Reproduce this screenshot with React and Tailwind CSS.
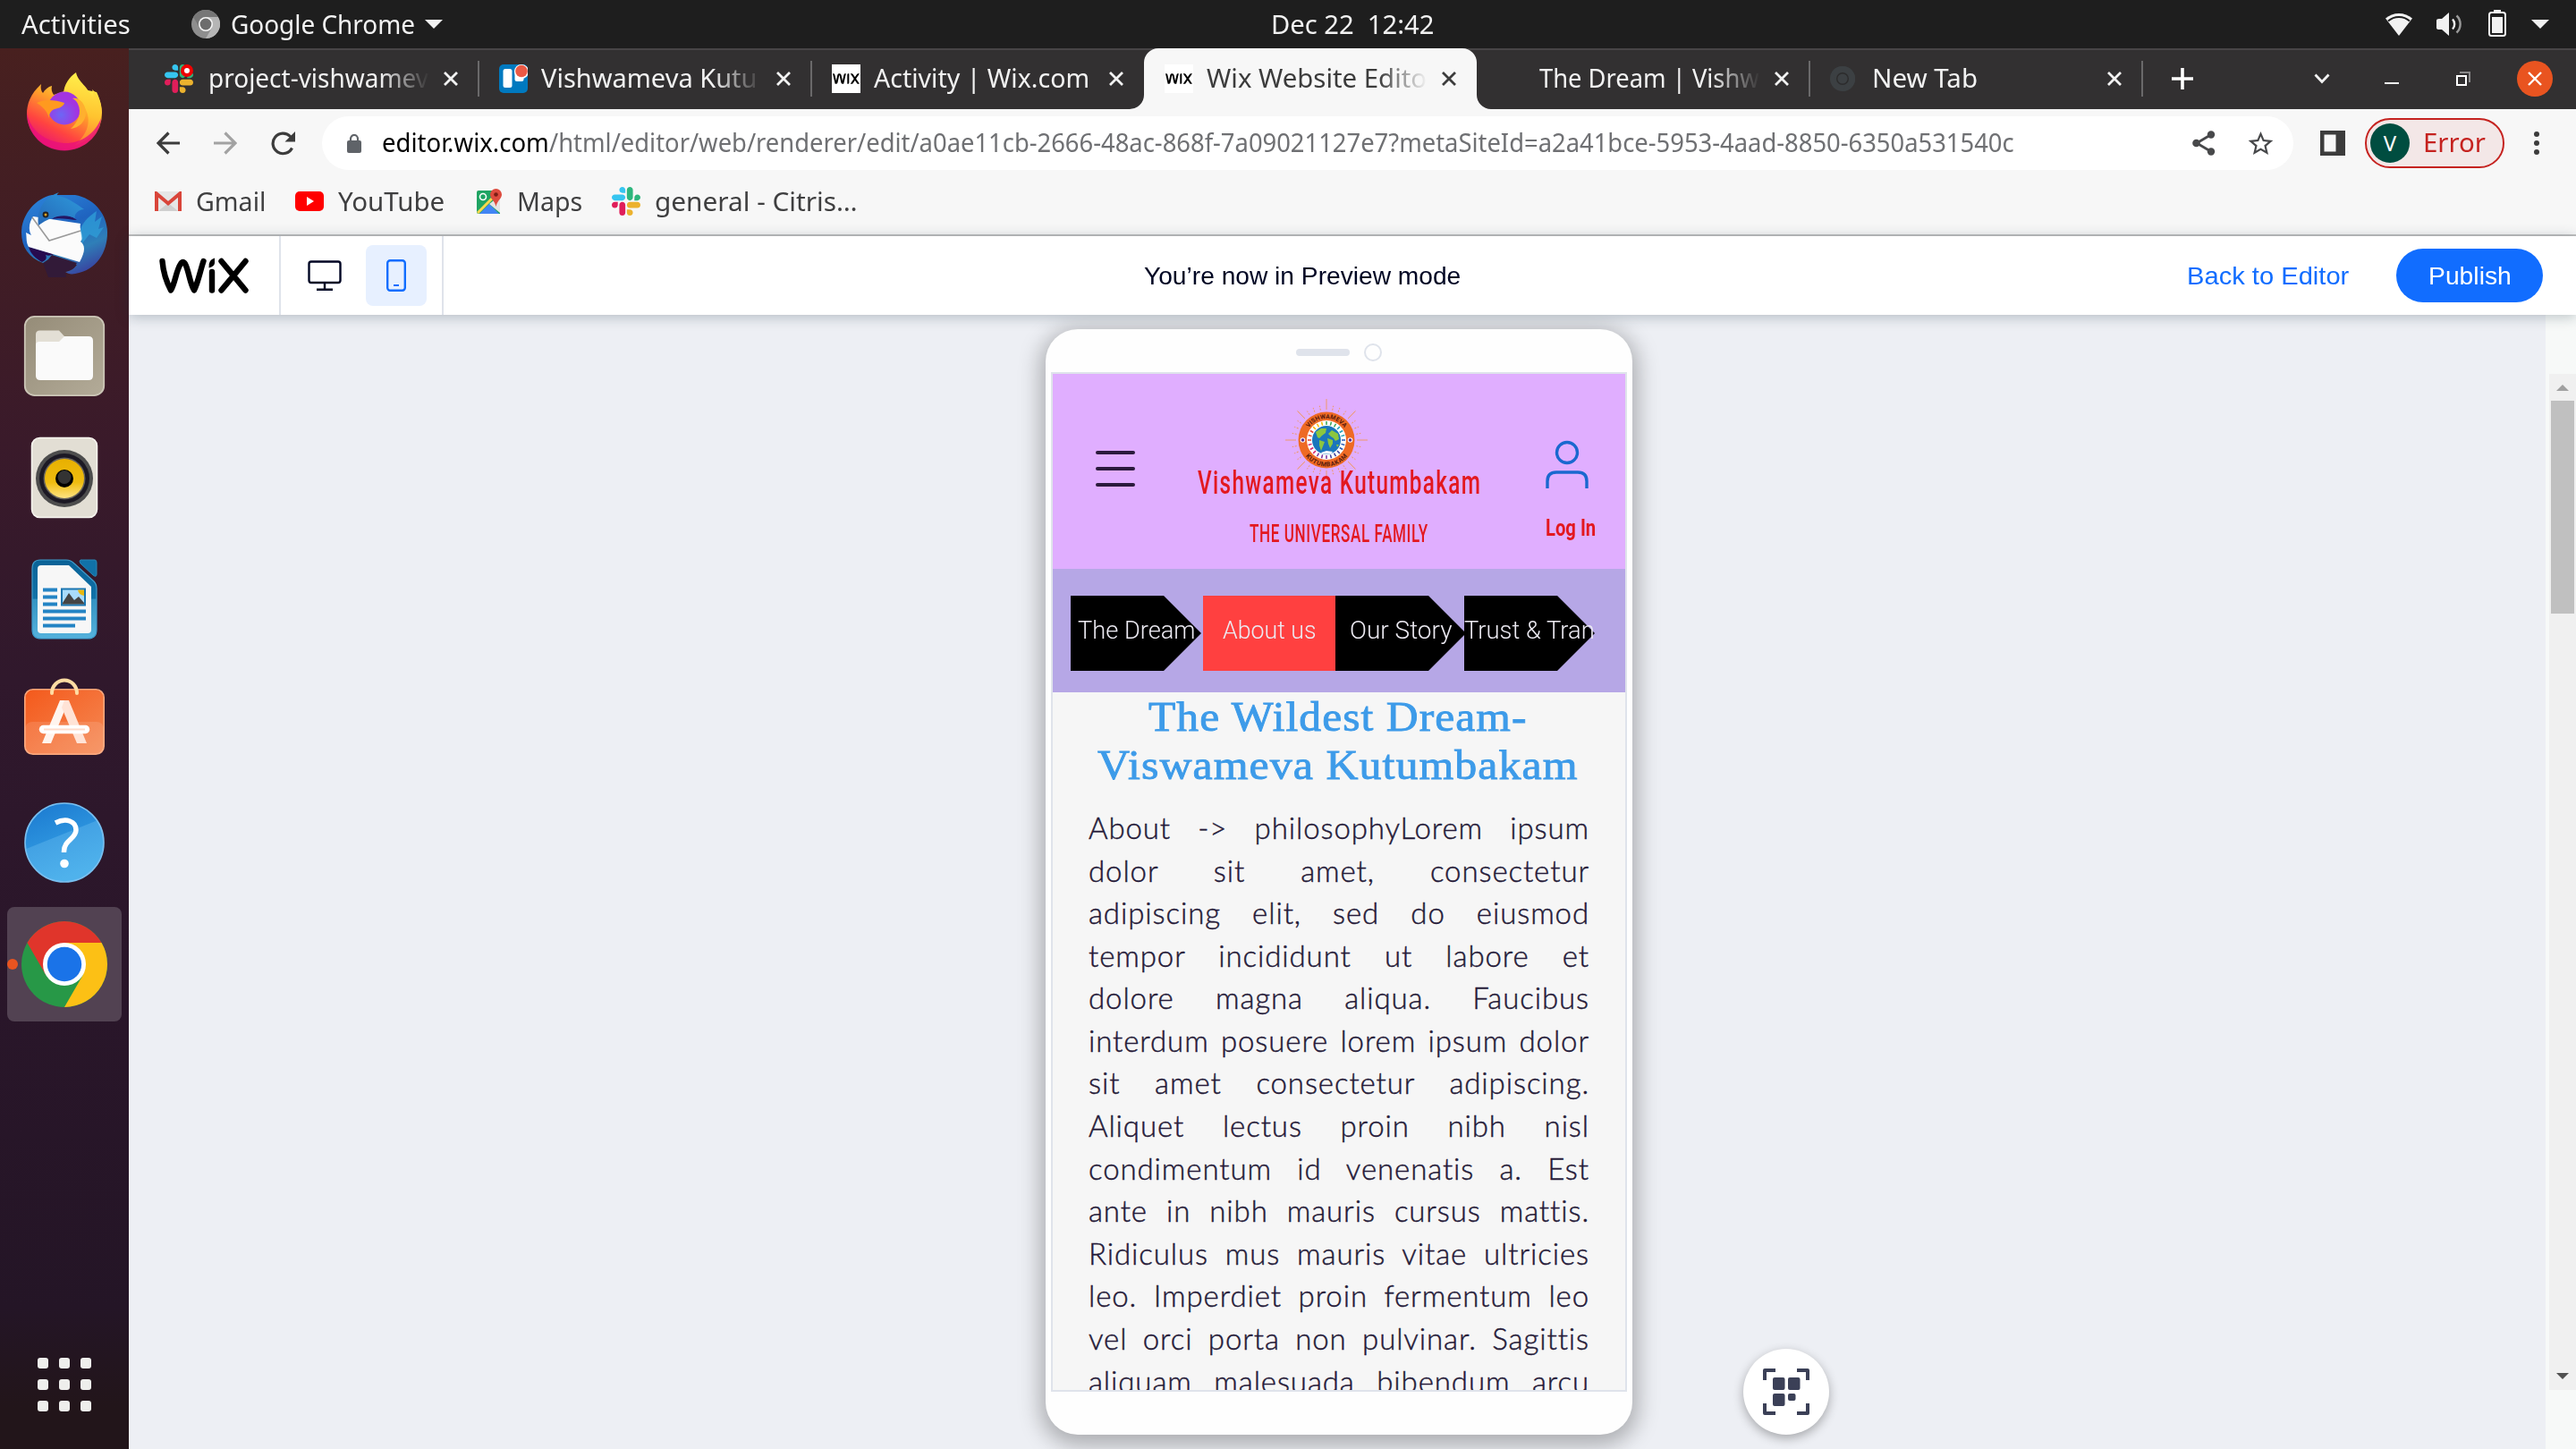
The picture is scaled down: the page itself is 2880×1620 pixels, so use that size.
import React, { useLayoutEffect, useRef } from "react";
import { SiWix } from "react-icons/si";

// Text squeezed or stretched horizontally to an exact width.
function Fit({ w, className = "", children }) {
  const ref = useRef(null);
  useLayoutEffect(() => {
    const apply = () => {
      const el = ref.current;
      if (el) el.style.transform = `scaleX(${w / el.offsetWidth})`;
    };
    apply();
    document.fonts?.ready.then(apply);
  }, [w]);
  return (
    <span className={"block shrink-0 " + className} style={{ width: w }}>
      <span ref={ref} className="inline-block origin-left whitespace-pre">{children}</span>
    </span>
  );
}

function Slack({ className }) {
  return (
    <svg viewBox="0 0 122.8 122.8" className={className}>
      <path fill="#e01e5a" d="M25.8 77.6c0 7.1-5.8 12.9-12.9 12.9S0 84.7 0 77.6s5.8-12.9 12.9-12.9h12.9v12.9zm6.5 0c0-7.1 5.8-12.9 12.9-12.9s12.9 5.8 12.9 12.9v32.3c0 7.1-5.8 12.9-12.9 12.9s-12.9-5.8-12.9-12.9V77.6z" />
      <path fill="#36c5f0" d="M45.2 25.8c-7.1 0-12.9-5.8-12.9-12.9S38.1 0 45.2 0s12.9 5.8 12.9 12.9v12.9H45.2zm0 6.5c7.1 0 12.9 5.8 12.9 12.9s-5.8 12.9-12.9 12.9H12.9C5.8 58.1 0 52.3 0 45.2s5.8-12.9 12.9-12.9h32.3z" />
      <path fill="#2eb67d" d="M97 45.2c0-7.1 5.8-12.9 12.9-12.9s12.9 5.8 12.9 12.9-5.8 12.9-12.9 12.9H97V45.2zm-6.5 0c0 7.1-5.8 12.9-12.9 12.9s-12.9-5.8-12.9-12.9V12.9C64.7 5.8 70.5 0 77.6 0s12.9 5.8 12.9 12.9v32.3z" />
      <path fill="#ecb22e" d="M77.6 97c7.1 0 12.9 5.8 12.9 12.9s-5.8 12.9-12.9 12.9-12.9-5.8-12.9-12.9V97h12.9zm0-6.5c-7.1 0-12.9-5.8-12.9-12.9s5.8-12.9 12.9-12.9h32.3c7.1 0 12.9 5.8 12.9 12.9s-5.8 12.9-12.9 12.9H77.6z" />
    </svg>
  );
}

function ChromeMark({ className, top, right, left, center, ring }) {
  return (
    <svg viewBox="0 0 96 96" className={className}>
      <circle cx="48" cy="48" r="48" fill={left} />
      <path fill={right} d="M48 24H89.57A48 48 0 0 1 48 96L68.8 60z" />
      <path fill={top} d="M6.43 24A48 48 0 0 1 89.57 24H48L27.2 60z" />
      <circle cx="48" cy="48" r="24" fill={ring} />
      <circle cx="48" cy="48" r="19.2" fill={center} />
    </svg>
  );
}

function TabClose({ dark }) {
  return (
    <svg viewBox="0 0 16 16" className="ml-4 size-4 shrink-0">
      <path d="M1 1 15 15M15 1 1 15" stroke={dark ? "#3c3c3c" : "#f2f2f2"} strokeWidth="2.8" fill="none" />
    </svg>
  );
}

const fade = "overflow-hidden [mask-image:linear-gradient(90deg,#000_78%,transparent_100%)]";

function Tab({ icon, text, w, faded, active, sep }) {
  return (
    <div className={"flex h-[68px] w-[372px] shrink-0 items-center " + (active ? "relative rounded-t-2xl bg-[#f7f7f7] text-[#3c3c3c]" : "text-[#f2f2f2]")}>
      {active && (
        <>
          <svg viewBox="0 0 16 16" className="absolute -left-4 bottom-0 size-4"><path fill="#f7f7f7" d="M16 0V16H0A16 16 0 0 0 16 0z" /></svg>
          <svg viewBox="0 0 16 16" className="absolute -right-4 bottom-0 size-4"><path fill="#f7f7f7" d="M0 0V16H16A16 16 0 0 1 0 0z" /></svg>
        </>
      )}
      <div className="ml-[23px] size-8 shrink-0">{icon}</div>
      <div className={"ml-[15px] h-10 w-[247px] shrink-0 -translate-y-px text-[29px] leading-10 " + (faded ? fade : "")}>
        <Fit w={w}>{text}</Fit>
      </div>
      <TabClose dark={active} />
      {sep && <div className="ml-[22px] h-10 w-0.5 shrink-0 bg-[#6a696a]" />}
    </div>
  );
}

const wixIcon = (
  <div className="flex size-8 items-center justify-center bg-white text-black">
    <SiWix className="size-[30px]" />
  </div>
);

const trelloIcon = (
  <svg viewBox="0 0 32 32" className="size-8">
    <rect width="32" height="32" rx="5" fill="#0079bf" />
    <rect x="4.500" y="5" width="10" height="21" rx="2.500" fill="#fff" />
    <rect x="17.500" y="5" width="10" height="14" rx="2.500" fill="#fff" />
    <circle cx="25" cy="8" r="8" fill="#fff" />
    <circle cx="25" cy="7.500" r="6.800" fill="#eb5a46" />
  </svg>
);

const slackAlert = (
  <div className="relative -ml-0.5 size-8">
    <Slack className="size-8" />
    <svg viewBox="0 0 14 14" className="absolute right-0 top-0 size-[14px]">
      <circle cx="7" cy="7" r="7" fill="#e00" />
      <circle cx="7" cy="7" r="3" fill="#fff" />
    </svg>
  </div>
);

function TopBar() {
  return (
    <div className="flex h-[54px] items-center bg-[#1e1e1e] text-[29px] leading-[54px] text-[#f2f2f2]">
      <Fit w={122} className="ml-6">Activities</Fit>
      <ChromeMark className="ml-[68px] size-8" top="#777" right="#b5b5b5" left="#8e8e8e" center="#6d6d6d" ring="#f5f5f5" />
      <Fit w={206} className="ml-3">Google Chrome</Fit>
      <svg viewBox="0 0 20 10" className="ml-[11px] h-2.5 w-5"><path d="M0 0H20L10 10z" fill="#f2f2f2" /></svg>
      <Fit w={182} className="ml-[926px]">Dec 22  12:42</Fit>
      <div className="ml-auto flex items-center gap-6 pr-[30px]">
        <svg viewBox="0 0 30 26" className="mr-[3px] h-[26px] w-[30px]">
          <path d="M0 6.500A23 23 0 0 1 30 6.500L15 26z" fill="#f2f2f2" />
          <path d="M3 9.500A18 18 0 0 1 27 9.500" stroke="#1e1e1e" strokeWidth="2" fill="none" />
        </svg>
        <svg viewBox="0 0 30 26" className="h-[26px] w-[30px]">
          <path d="M0 9Q0 7 3 7H6L14 0V26L6 19H3Q0 19 0 17z" fill="#f2f2f2" />
          <path d="M18 7.500A8 8 0 0 1 18 18.500" stroke="#f2f2f2" strokeWidth="2.400" fill="none" />
          <path d="M22.500 3.500A13 13 0 0 1 22.500 22.500" stroke="#9a9a9a" strokeWidth="2.400" fill="none" />
        </svg>
        <svg viewBox="0 0 20 30" className="mx-1 -mt-0.5 h-[30px] w-5">
          <rect x="6" width="8" height="4" fill="#f2f2f2" />
          <rect x="1" y="3" width="18" height="26" rx="2.500" fill="none" stroke="#f2f2f2" strokeWidth="2" />
          <rect x="4" y="8" width="12" height="18" fill="#f2f2f2" />
        </svg>
        <svg viewBox="0 0 20 10" className="h-2.5 w-5"><path d="M0 0H20L10 10z" fill="#f2f2f2" /></svg>
      </div>
    </div>
  );
}

function Firefox() {
  return (
    <svg viewBox="0 0 96 96" className="size-24">
      <defs>
        <linearGradient id="ffA" x1=".85" y1=".1" x2=".3" y2="1">
          <stop offset="0" stopColor="#ffe844" /><stop offset=".35" stopColor="#ffa02a" /><stop offset=".7" stopColor="#ff4440" /><stop offset="1" stopColor="#e8107a" />
        </linearGradient>
        <linearGradient id="ffB" x1=".7" y1="0" x2=".6" y2="1">
          <stop offset="0" stopColor="#fff24d" /><stop offset=".6" stopColor="#ffc32f" /><stop offset="1" stopColor="#ff7a35" />
        </linearGradient>
        <radialGradient id="ffC" cx=".4" cy=".7"><stop offset="0" stopColor="#6d66f5" /><stop offset="1" stopColor="#a334e0" /></radialGradient>
      </defs>
      <path fill="url(#ffA)" d="M6 50C6 38 10 27 22 16C21 20 22 24 24 26C26 22 30 19 34 18C33 22 34 25 36 28L60 20L84 25C88 33 90 42 90 48A42 41 0 0 1 6 50z" />
      <path fill="url(#ffB)" d="M47 28C47 16 54 8 61 3C63 14 75 18 80 34C81 29 80 26 79 22C87 28 91 40 89 53C86 70 74 80 60 84C72 74 78 60 73 47C69 36 58 30 47 28z" />
      <circle cx="48" cy="43" r="18.500" fill="url(#ffC)" />
      <path fill="#ffb02e" d="M57 32C64 30 72 38 72 48C72 58 64 65 55 66C63 59 68 48 63 38C61 34 59 33 57 32z" />
      <path fill="#ff9a1f" d="M17 37C25 33 36 33 48 37C47 41 42 43 37 44C32 46 31 50 31 54C29 49 28 44 17 37z" />
      <path fill="#e8107a" opacity=".8" d="M6 48C10 68 26 80 47 82C66 83 82 72 89 54C88 74 70 90 48 90.500C24 90 6 72 6 48z" />
    </svg>
  );
}

function Thunderbird() {
  return (
    <svg viewBox="0 0 96 96" className="size-24">
      <defs>
        <linearGradient id="tbA" x1=".3" y1="0" x2=".8" y2="1"><stop offset="0" stopColor="#2a7fd6" /><stop offset=".4" stopColor="#1f63bf" /><stop offset=".7" stopColor="#2f7fb8" /><stop offset="1" stopColor="#3a3a9c" /></linearGradient>
        <linearGradient id="tbB" x1="1" y1="0" x2="0" y2="1"><stop offset="0" stopColor="#2f9bdc" /><stop offset="1" stopColor="#2468b8" /></linearGradient>
      </defs>
      <path fill="url(#tbA)" d="M0 46C0 28 14 8 34 4L60 4C82 8 96 26 96 46C96 68 84 88 60 92C55 93 52 92 49 90C55 89 58 87 62 82L24 80C8 74 0 62 0 46z" />
      <path fill="#270b4f" d="M8 62L36 70C32 72 30 72 27 71C29 75 27 77 23 79C16 75 10 70 8 62z" />
      <path fill="#321a38" d="M24 80L30 76L34 71L62 80L58 86L49 90L50 96H30z" />
      <path fill="#fbfbfb" d="M13 28L66 36C64 46 72 50 66 56C71 60 72 66 65 79L8 62C5 57 6 52 5 46L11 49C7 42 9 34 13 28z" />
      <path fill="none" stroke="#9a9a9a" strokeWidth="1.600" d="M12 29L31 55L66 44" />
      <path fill="#231562" d="M34 31C45 22 56 28 62 32C54 32 44 29 34 31z" />
      <path fill="url(#tbB)" d="M19 38C17 24 22 8 42 1C40 3 39 4 40 5C50 6 60 13 70 20C64 20 58 26 60 30C48 24 32 28 19 38z" />
      <path fill="#2f9fd8" opacity=".75" d="M66 42C70 32 78 26 84 22L82 34L90 28L86 42L92 40L84 52L76 48L68 58z" />
      <circle cx="27" cy="26" r="3.400" fill="#222" /><circle cx="27" cy="26" r="1.500" fill="#e0a020" />
    </svg>
  );
}

function FilesIcon() {
  return (
    <svg viewBox="0 0 96 96" className="size-24">
      <defs><linearGradient id="fi" x1="0" y1="0" x2="1" y2="1"><stop offset="0" stopColor="#958c78" /><stop offset="1" stopColor="#b3ab98" /></linearGradient></defs>
      <rect x="3.800" y="3.800" width="88.400" height="88.400" rx="11" fill="url(#fi)" stroke="#cbc5b6" strokeWidth="1.800" />
      <path fill="#e3dfd5" d="M16 34V24Q16 19.500 20.500 19.500H42L48 26V40H16z" />
      <path fill="#fafafa" d="M16 36Q16 32 20 32H42L48 26H75Q80 26 80 31V70Q80 75 75 75H21Q16 75 16 70z" />
    </svg>
  );
}

function SpeakerIcon() {
  return (
    <svg viewBox="0 0 96 96" className="size-24">
      <defs><linearGradient id="sp" x1="0" y1="0" x2="0" y2="1"><stop offset="0" stopColor="#e8b000" /><stop offset=".6" stopColor="#efbc10" /><stop offset="1" stopColor="#ffe483" /></linearGradient></defs>
      <rect x="11.500" y="3.500" width="73" height="89" rx="9" fill="#e2ded4" stroke="#f7f5f0" strokeWidth="1.500" />
      <circle cx="48" cy="49" r="32" fill="#4d4d4d" />
      <circle cx="48" cy="49" r="28" fill="#1c1924" />
      <circle cx="48" cy="49" r="23.500" fill="#66625c" />
      <circle cx="48" cy="49" r="22" fill="url(#sp)" />
      <circle cx="48" cy="49" r="10" fill="#000" />
      <circle cx="48" cy="47.500" r="7.500" fill="#333" />
    </svg>
  );
}

function WriterIcon() {
  return (
    <svg viewBox="0 0 96 96" className="size-24">
      <defs><linearGradient id="wr" x1="0" y1="0" x2="0" y2="1"><stop offset="0" stopColor="#0a6296" /><stop offset=".49" stopColor="#1172a8" /><stop offset=".5" stopColor="#3493c2" /><stop offset="1" stopColor="#55b2dc" /></linearGradient></defs>
      <path fill="url(#wr)" stroke="#3f9ccb" strokeWidth="1.200" d="M21 4H50Q55 4 59 8L81 28Q84 31 84 36V82Q84 92 74 92H22Q12 92 12 82V14Q12 4 21 4z" />
      <path fill="#1172a8" stroke="#2b86b5" d="M66 4H82Q84 4 84 7V20Q84 24 80 21L66 8Q64 5 66 4z" />
      <path fill="#f7f7f7" d="M22 10H53L78 34V82Q78 86 74 86H22Q18 86 18 82V14Q18 10 22 10z" />
      <path stroke="#2484c4" strokeWidth="4" d="M24 37.500H40M24 45.500H40M24 53.500H40M24 61.500H72M24 69.500H72M24 77.500H60" />
      <rect x="45" y="36.500" width="26" height="18" fill="#a9dcfb" stroke="#1a75b0" strokeWidth="2" />
      <path fill="#e8b810" d="M63 37.500H70V44Q64 43 63 37.500z" />
      <path fill="#454545" d="M46 52L53 41L59 49L64 45L70 52V53.500H46z" />
    </svg>
  );
}

function SoftwareIcon() {
  return (
    <svg viewBox="0 0 96 96" className="size-24">
      <defs><linearGradient id="sw" x1="0" y1="0" x2="1" y2="1"><stop offset="0" stopColor="#f4591b" /><stop offset="1" stopColor="#f58a55" /></linearGradient></defs>
      <rect x="3.800" y="12.800" width="88.400" height="72.400" rx="9" fill="url(#sw)" stroke="#f9a77c" strokeWidth="1.600" />
      <rect x="4" y="49" width="88" height="36" rx="8" fill="#fff" opacity=".12" />
      <path d="M34 17A14 14.500 0 0 1 62 17" fill="none" stroke="#ffdca3" strokeWidth="4" strokeLinecap="round" />
      <path fill="#fff4ee" d="M43 25H53L33 73H23z" />
      <path fill="#ffe3d6" d="M48 25H53L73 73H62L45 33z" />
      <path d="M24.500 57.500H71.500" stroke="#fff" strokeWidth="9.500" strokeLinecap="round" />
      <path d="M25 57.500H71" stroke="#ffdccb" strokeWidth="2" />
    </svg>
  );
}

function HelpIcon() {
  return (
    <svg viewBox="0 0 96 96" className="size-24">
      <defs><linearGradient id="hp" x1="0" y1="0" x2=".4" y2="1"><stop offset="0" stopColor="#1a78cf" /><stop offset=".5" stopColor="#2a90dc" /><stop offset=".51" stopColor="#43a2e4" /><stop offset="1" stopColor="#4fb2ec" /></linearGradient></defs>
      <circle cx="48" cy="48" r="44" fill="url(#hp)" stroke="#78bff0" strokeWidth="1.600" />
      <path fill="none" stroke="#fff" strokeWidth="5.500" d="M38 26C50 20 61 24 61 34C61 44 47.500 45 47.500 58V59" />
      <circle cx="48" cy="71.500" r="4.800" fill="#fff" />
    </svg>
  );
}

function Dock() {
  const icons = [Firefox, Thunderbird, FilesIcon, SpeakerIcon, WriterIcon, SoftwareIcon, HelpIcon];
  return (
    <div className="flex w-36 shrink-0 flex-col items-center bg-[linear-gradient(180deg,#48201f_0%,#3a1a2a_28%,#30182c_45%,#2a162a_65%,#241526_90%,#22151a_97%)] pt-1">
      {icons.map((Icon, i) => (
        <div key={i} className="flex h-[136px] items-center"><Icon /></div>
      ))}
      <div className="mt-1 flex h-32 w-32 items-center justify-center rounded-lg bg-[#524252]">
        <div className="-ml-4 mr-1 size-3 rounded-full bg-[#e95420]" />
        <ChromeMark className="size-24" top="#e0352b" right="#fcc015" left="#279847" center="#1a73e8" ring="#fff" />
      </div>
      <div className="mb-[42px] mt-auto grid grid-cols-3 gap-3">
        {Array.from({ length: 9 }, (_, i) => <div key={i} className="size-3 rounded-[3px] bg-[#eeeeec]" />)}
      </div>
    </div>
  );
}

function TabStrip() {
  return (
    <div className="flex h-[68px] items-center bg-[#323031] pl-[19px] shadow-[inset_0_2px_0_#474546]">
      <Tab icon={slackAlert} text="project-vishwamev" w={246} faded sep />
      <Tab icon={trelloIcon} text="Vishwameva Kutu" w={241} faded sep />
      <Tab icon={wixIcon} text="Activity | Wix.com" w={241} />
      <Tab icon={wixIcon} text="Wix Website Edito" w={246} faded active />
      <Tab icon={null} text="The Dream | Vishw" w={246} faded sep />
      <Tab
        icon={<ChromeMark className="size-7 translate-y-0.5" top="#3c4043" right="#3c4043" left="#3c4043" center="#3c4043" ring="#2c2b2c" />}
        text="New Tab" w={118} sep
      />
      <svg viewBox="0 0 24 24" className="ml-[33px] size-6"><path d="M12 0V24M0 12H24" stroke="#fff" strokeWidth="3.600" /></svg>
      <svg viewBox="0 0 18 12" className="ml-[135px] h-3 w-[18px]"><path d="M1.500 1.500 9 9.500 16.500 1.500" stroke="#f2f2f2" strokeWidth="2.800" fill="none" /></svg>
      <div className="ml-[61px] mt-2.5 h-0.5 w-4 bg-[#f2f2f2]" />
      <svg viewBox="0 0 16 16" className="ml-16 size-4">
        <path d="M4 1H15V12" stroke="#8a898a" strokeWidth="2" fill="none" />
        <rect x="1" y="5" width="10" height="10" stroke="#fff" strokeWidth="2" fill="none" />
      </svg>
      <div className="ml-[52px] flex size-10 items-center justify-center rounded-full bg-[#e95420]">
        <svg viewBox="0 0 16 16" className="size-4"><path d="M1 1 15 15M15 1 1 15" stroke="#fff" strokeWidth="2.400" /></svg>
      </div>
    </div>
  );
}

function Toolbar() {
  return (
    <div className="flex h-[76px] items-center bg-[#f7f7f7] pl-[31px]">
      <svg viewBox="0 0 26 26" className="size-[26px]"><path d="M26 13H2.500M13.500 1.500 2 13 13.500 24.500" stroke="#3c3c3c" strokeWidth="3.200" fill="none" /></svg>
      <svg viewBox="0 0 26 26" className="ml-[38px] size-[26px]"><path d="M0 13H23.500M12.500 1.500 24 13 12.500 24.500" stroke="#a2a2a2" strokeWidth="3.200" fill="none" /></svg>
      <svg viewBox="0 0 27 27" className="ml-[38px] size-[27px]">
        <path d="M23.500 18.500A11.300 11.300 0 1 1 21.500 5.500L23 7" stroke="#3c3c3c" strokeWidth="3.200" fill="none" />
        <path d="M27 0V11.500H15.500z" fill="#3c3c3c" />
      </svg>
      <div className="ml-[30px] flex h-[60px] w-[2204px] items-center rounded-full bg-white text-[29px] leading-[58px]">
        <svg viewBox="0 0 16 21" className="ml-7 h-[21px] w-4">
          <rect y="7" width="16" height="14" rx="2" fill="#5f6368" />
          <path d="M4 8V5A4 4 0 0 1 12 5V8" stroke="#5f6368" strokeWidth="2.200" fill="none" />
        </svg>
        <Fit w={187} className="ml-[23px] -translate-y-px text-black">editor.wix.com</Fit>
        <Fit w={1638} className="-translate-y-px text-[#6f7073]">/html/editor/web/renderer/edit/a0ae11cb-2666-48ac-868f-7a09021127e7?metaSiteId=a2a41bce-5953-4aad-8850-6350a531540c</Fit>
        <svg viewBox="0 0 26 28" className="ml-[199px] h-7 w-[26px]">
          <path d="M21 4.500 5 14 21 23.500" stroke="#47484a" strokeWidth="2.800" fill="none" />
          <circle cx="21" cy="4.500" r="4.200" fill="#47484a" /><circle cx="4.500" cy="14" r="4.300" fill="#47484a" /><circle cx="21" cy="23.500" r="4.200" fill="#47484a" />
        </svg>
        <svg viewBox="1.500 1.500 21 20" className="ml-9 h-7 w-[29px]">
          <path fill="#47484a" d="M22 9.240l-7.190-.62L12 2 9.190 8.630 2 9.240l5.460 4.730L5.820 21 12 17.270 18.180 21l-1.630-7.030L22 9.240zM12 15.400l-3.760 2.270 1-4.280-3.320-2.880 4.380-.38L12 6.100l1.710 4.040 4.380.38-3.320 2.880 1 4.280L12 15.400z" />
        </svg>
      </div>
      <svg viewBox="0 0 28 28" className="ml-[30px] size-7"><path fill="#3c3c3c" fillRule="evenodd" d="M0 0H28V28H0zM4.500 4.500V23.500H17.500V4.500z" /></svg>
      <div className="ml-[22px] flex h-14 w-[156px] items-center rounded-full border-[2.500px] border-[#c5221f] bg-[#f3e7e7] text-[29px] leading-[54px] text-[#c5221f]">
        <div className="ml-1 flex size-11 items-center justify-center rounded-full bg-[#004d40] text-[24px] text-white">V</div>
        <Fit w={70} className="ml-[15px] -translate-y-px">Error</Fit>
      </div>
      <svg viewBox="0 0 6 26" className="ml-[33px] h-[26px] w-1.5">
        <circle cx="3" cy="3" r="3" fill="#3c3c3c" /><circle cx="3" cy="13" r="3" fill="#3c3c3c" /><circle cx="3" cy="23" r="3" fill="#3c3c3c" />
      </svg>
    </div>
  );
}

function Bookmarks() {
  return (
    <div className="flex h-[66px] items-center border-b-2 border-[#c0c0c0] bg-[#f7f7f7] pb-2.5 pl-[29px] text-[29px] leading-[54px] text-[#3f3f40]">
      <svg viewBox="0 0 30 22" className="h-[22px] w-[30px]">
        <rect width="30" height="22" rx="2" fill="#e6e6e6" />
        <path fill="#cfcfcf" d="M4 22 15 13 26 22z" />
        <path d="M2 22V2.500L15 13.500 28 2.500V22" fill="none" stroke="#d9453a" strokeWidth="4" />
      </svg>
      <Fit w={78} className="ml-4">Gmail</Fit>
      <svg viewBox="0 0 32 22" className="ml-[33px] h-[22px] w-8"><rect width="32" height="22" rx="5" fill="#f00" /><path fill="#fff" d="M13 6 21 11 13 16z" /></svg>
      <Fit w={119} className="ml-4">YouTube</Fit>
      <svg viewBox="0 0 28 28" className="ml-[36px] size-7">
        <path fill="#1fa463" d="M2 2H20L26 10V28H2Q0 28 0 26V4Q0 2 2 2z" />
        <path fill="#4285f4" d="M3 28 14 17 25 28z" />
        <path fill="#e4e4e4" d="M14 17 26 8V27z" />
        <path fill="none" stroke="#ffd84d" strokeWidth="3" d="M1 27 17 11" />
        <circle cx="7" cy="9" r="3.500" fill="none" stroke="#fff" strokeWidth="1.600" />
        <path fill="#dd4b3e" d="M21.500 0A6.500 6.500 0 0 1 28 6.500C28 11 23 13 21.500 20C20 13 15 11 15 6.500A6.500 6.500 0 0 1 21.500 0z" />
        <circle cx="21.500" cy="6.500" r="2.300" fill="#7b1d15" />
      </svg>
      <Fit w={73} className="ml-[17px]">Maps</Fit>
      <Slack className="ml-[33px] size-8" />
      <Fit w={227} className="ml-4">general - Citris…</Fit>
    </div>
  );
}

function WixLogo() {
  return (
    <svg viewBox="0 0 100 40" className="ml-[34px] h-10 w-[100px]">
      <g fill="none" stroke="#000" strokeWidth="6.400" strokeLinejoin="round" strokeLinecap="round">
        <path d="M3.500 4C4.500 16 8.500 28 13 36.500C18 28 19 14 24 7Q26.500 3 29 7C33 14 34 28 39 36.500C43.500 28 46 14 49.500 4" />
        <path d="M59 16V36.500" />
        <path d="M69.500 4 96.500 36.500M96.500 4 69.500 36.500" />
      </g>
      <path d="M62 0.500V6Q62 9.500 55.500 11.500Q54.500 2.500 62 0.500z" />
    </svg>
  );
}

function WixBar() {
  return (
    <div className="relative z-10 flex h-[88px] shrink-0 items-center bg-white font-['Liberation_Sans',sans-serif] text-[28px] leading-[88px] shadow-[0_2px_14px_rgba(22,45,61,0.28)]">
      <WixLogo />
      <div className="ml-[34px] h-full w-0.5 bg-[#dfe3eb]" />
      <svg viewBox="0 0 38 34" className="ml-[30px] h-[34px] w-[38px]">
        <rect x="1.500" y="1.500" width="35" height="23.500" rx="2.500" fill="none" stroke="#000624" strokeWidth="2.400" />
        <path d="M19 25V32.500M10 32.800H28" stroke="#000624" strokeWidth="2.400" />
      </svg>
      <div className="ml-[27px] flex h-[68px] w-[68px] items-center justify-center rounded-lg bg-[#e7f0ff]">
        <svg viewBox="0 0 22 36" className="h-9 w-[22px]">
          <rect x="1.200" y="1.200" width="19.600" height="33.600" rx="3" fill="none" stroke="#116dff" strokeWidth="2.400" />
          <path d="M8 29H14" stroke="#116dff" strokeWidth="2" />
        </svg>
      </div>
      <div className="ml-[17px] h-full w-0.5 bg-[#dfe3eb]" />
      <Fit w={354} className="ml-[783px] translate-y-px text-[#000624]">You’re now in Preview mode</Fit>
      <Fit w={181} className="ml-[812px] translate-y-px text-[#116dff]">Back to Editor</Fit>
      <div className="ml-[53px] flex h-[60px] w-[164px] items-center justify-center rounded-full bg-[#116dff] leading-[60px] text-white">
        <Fit w={93} className="translate-y-px">Publish</Fit>
      </div>
    </div>
  );
}

function Emblem() {
  const rays = Array.from({ length: 32 }, (_, i) => i);
  const people = Array.from({ length: 24 }, (_, i) => i);
  const hues = ["#3aa655", "#1fa0b8", "#2456b0", "#3b3f9c", "#7a2f9c", "#d6246e", "#e8442a", "#f5b800"];
  return (
    <svg viewBox="-50 -50 100 100" className="mr-[28px] size-[100px] shrink-0">
      {rays.map((i) => (
        <path key={i} d={`M0 -34V${i % 4 === 0 ? -46 : -39}`} stroke="#f0965a" strokeWidth=".9" strokeDasharray={i % 4 === 0 ? "" : "2 1.5"} transform={`rotate(${i * 11.25})`} />
      ))}
      <circle r="31.500" fill="#ee6a24" />
      <circle r="22" fill="#fff" />
      {people.map((i) => (
        <path key={i} d="M0 -21V-17" stroke={hues[Math.floor(i / 3)]} strokeWidth="1.500" transform={`rotate(${i * 15})`} />
      ))}
      <circle r="16" fill="#1b75bc" />
      <path fill="#8cc63f" d="M-12 -9 -6 -13 0 -13 -1 -8 -5 -5 -8 -2 -10 -3zM-8 0 -2 2 -4 7 -6 12 -8 6zM2 -7 6 -11 13 -7 14 -1 10 1 8 -2 5 -4zM1 -2 7 0 7 4 4 9 2 4zM11 5 14 5 12 8z" />
      <path fill="#fff" d="M-6 14 0 12 7 13 5 15.500H-5z" />
      <circle cx="-26.500" r="2.800" fill="#fff" /><circle cx="-26.500" r="1.800" fill="#5b2d8e" />
      <circle cx="26.500" r="2.800" fill="#fff" /><circle cx="26.500" r="1.800" fill="#5b2d8e" />
      <defs>
        <path id="arcTop" d="M-24 0A24 24 0 0 1 24 0" />
        <path id="arcBottom" d="M-29.500 0A29.500 29.500 0 0 0 29.500 0" />
      </defs>
      <g fill="#5a1a0c" fontSize="7" fontWeight="700" fontFamily="Roboto, sans-serif" textAnchor="middle">
        <text><textPath href="#arcTop" startOffset="50%" textLength="46">VISHWAMEVA</textPath></text>
        <text><textPath href="#arcBottom" startOffset="50%" textLength="54">KUTUMBAKAM</textPath></text>
      </g>
    </svg>
  );
}

function SiteHeader() {
  return (
    <div className="flex h-[218px] shrink-0 bg-[#e0aeff] font-['Roboto',sans-serif] text-[#e3181f]">
      <div className="ml-12 mt-[86px] flex h-10 w-11 flex-col justify-between">
        <div className="h-1 rounded-sm bg-[#2b1a3d]" />
        <div className="h-1 rounded-sm bg-[#2b1a3d]" />
        <div className="h-1 rounded-sm bg-[#2b1a3d]" />
      </div>
      <div className="ml-[70px] flex w-[316px] flex-col items-center pt-6">
        <Emblem />
        <Fit w={317} className="-mt-[22px] h-10 text-[36px] font-medium leading-10 tracking-[2px]">Vishwameva Kutumbakam</Fit>
        <Fit w={200} className="mt-[22px] h-[30px] text-[27px] font-medium leading-[30px] tracking-[1px]">THE UNIVERSAL FAMILY</Fit>
      </div>
      <div className="ml-[71px] flex w-[60px] flex-col items-center pt-[74px]">
        <svg viewBox="0 0 48 54" className="-ml-2 h-[54px] w-12">
          <circle cx="24" cy="14" r="11.500" fill="none" stroke="#1a68cf" strokeWidth="3.400" />
          <path d="M2 54V46Q2 36 12 36H36Q46 36 46 46V54" fill="none" stroke="#1a68cf" strokeWidth="3.400" />
        </svg>
        <Fit w={56} className="mt-[29px] h-[30px] text-[26px] font-bold leading-[30px]">Log In</Fit>
      </div>
    </div>
  );
}

function NavArrow({ text, w, boxClass, active }) {
  return (
    <div className={"grid h-[84px] shrink-0 " + boxClass}>
      {active ? (
        <div className="bg-[#ff4040] [grid-area:1/1]" />
      ) : (
        <svg viewBox="0 0 146 84" className="h-[84px] w-[146px] [grid-area:1/1]"><path d="M0 0H104L146 42 104 84H0z" /></svg>
      )}
      <div className="z-10 flex justify-center overflow-hidden font-light leading-[78px] [grid-area:1/1]">
        <Fit w={w}>{text}</Fit>
      </div>
    </div>
  );
}

const lines = [
  "About -> philosophyLorem ipsum",
  "dolor sit amet, consectetur",
  "adipiscing elit, sed do eiusmod",
  "tempor incididunt ut labore et",
  "dolore magna aliqua. Faucibus",
  "interdum posuere lorem ipsum dolor",
  "sit amet consectetur adipiscing.",
  "Aliquet lectus proin nibh nisl",
  "condimentum id venenatis a. Est",
  "ante in nibh mauris cursus mattis.",
  "Ridiculus mus mauris vitae ultricies",
  "leo. Imperdiet proin fermentum leo",
  "vel orci porta non pulvinar. Sagittis",
  "aliquam malesuada bibendum arcu",
];

function Phone() {
  return (
    <div className="flex h-[1236px] w-[656px] shrink-0 flex-col items-center rounded-[36px] bg-[#fefefe] shadow-[0_6px_24px_6px_rgba(0,0,0,0.28)]">
      <div className="flex h-12 items-center gap-4 pt-1">
        <div className="h-2 w-[60px] rounded bg-[#dfe3eb]" />
        <div className="size-5 rounded-full border-2 border-[#dfe3eb]" />
      </div>
      <div className="flex h-[1140px] w-[644px] flex-col overflow-hidden border-2 border-[#dfe3eb] bg-[#f6f6f6]">
        <SiteHeader />
        <div className="flex h-[138px] shrink-0 bg-[#b6a7e6] pl-5 pt-[30px] font-['Roboto',sans-serif] text-[27px] text-[#eceaf2]">
          <NavArrow text="The Dream" w={131} boxClass="w-[148px] [&>div]:w-[146px]" />
          <NavArrow text="About us" w={105} boxClass="w-[148px]" active />
          <NavArrow text="Our Story" w={115} boxClass="w-[144px] [&>div]:w-[146px]" />
          <NavArrow text="Trust & Tran" w={146} boxClass="w-[146px]" />
        </div>
        <div className="flex shrink-0 flex-col items-center font-['Liberation_Serif',serif] text-[47px] leading-[54px] text-[#3d9be9] [-webkit-text-stroke:0.9px_#3d9be9]">
          <Fit w={424} className="-ml-0.5 tracking-[1px]">The Wildest Dream-</Fit>
          <Fit w={538} className="-ml-0.5 tracking-[1px]">Viswameva Kutumbakam</Fit>
        </div>
        <div className="ml-10 mt-5 w-[560px] shrink-0 font-['Lato',sans-serif] text-[33px] font-light leading-[47.580px] tracking-[0.9px] text-[#251a38] [-webkit-text-stroke:0.45px_#251a38]">
          {lines.map((l) => (
            <div key={l} className="whitespace-nowrap [text-align-last:justify]">{l}</div>
          ))}
        </div>
      </div>
    </div>
  );
}

function Scrollbar() {
  return (
    <div className="flex w-[34px] shrink-0 flex-col items-end bg-[#f7f9f8] pt-[66px]">
      <div className="flex h-[1136px] w-[30px] flex-col items-center bg-[#f0f0f0]">
        <svg viewBox="0 0 14 7" className="mt-3 h-[7px] w-3.5"><path d="M0 7H14L7 0z" fill="#a0a0a0" /></svg>
        <div className="mt-[11px] h-[238px] w-[26px] bg-[#c0c0c0]" />
        <svg viewBox="0 0 14 7" className="mb-3 mt-auto h-[7px] w-3.5"><path d="M0 0H14L7 7z" fill="#505050" /></svg>
      </div>
    </div>
  );
}

function QrButton() {
  return (
    <div className="mb-4 ml-[124px] flex size-24 items-center justify-center self-end rounded-full bg-white shadow-[0_4px_12px_rgba(0,0,0,0.3)]">
      <svg viewBox="0 0 52 52" className="size-[52px]" fill="#3b4057">
        <path fill="none" stroke="#3b4057" strokeWidth="4" strokeLinejoin="round" d="M2 13V2H14M38 2H50V13M50 39V50H38M14 50H2V39" />
        <rect x="11" y="10" width="13.500" height="14" rx="2" /><rect x="28" y="10" width="13.500" height="14" rx="2" />
        <rect x="11" y="28" width="13.500" height="14" rx="2" /><rect x="28" y="28" width="8.500" height="8" rx="2" />
      </svg>
    </div>
  );
}

export default function App() {
  return (
    <div className="flex h-[1620px] w-[2880px] flex-col overflow-hidden bg-[#eceef3] font-['Noto_Sans',sans-serif]">
      <TopBar />
      <div className="flex min-h-0 flex-1">
        <Dock />
        <div className="flex min-w-0 flex-1 flex-col">
          <TabStrip />
          <Toolbar />
          <Bookmarks />
          <WixBar />
          <div className="flex min-h-0 flex-1">
            <div className="flex flex-1 bg-[#edeff4] pl-[1025px] pt-4">
              <Phone />
              <QrButton />
            </div>
            <Scrollbar />
          </div>
        </div>
      </div>
    </div>
  );
}
